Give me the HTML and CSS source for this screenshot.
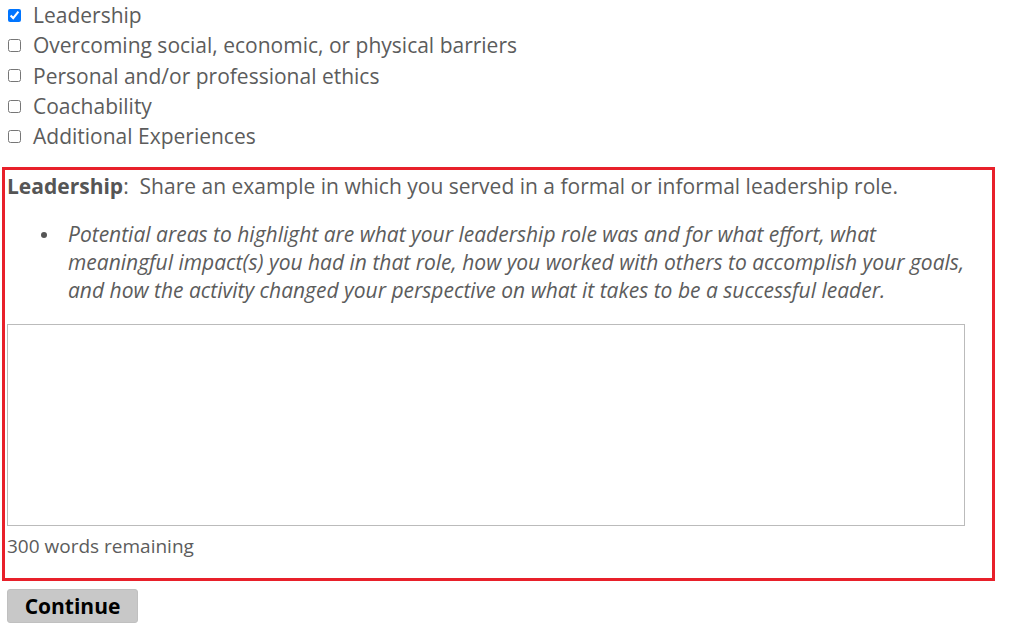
FILE: index.html
```html
<!DOCTYPE html>
<html>
<head>
<meta charset="utf-8">
<link rel="stylesheet" href="styles.css">
</head>
<body>
<div class="page">
  <ul class="options">
    <li><label><input type="checkbox" checked> Leadership</label></li>
    <li><label><input type="checkbox"> Overcoming social, economic, or physical barriers</label></li>
    <li><label><input type="checkbox"> Personal and/or professional ethics</label></li>
    <li><label><input type="checkbox"> Coachability</label></li>
    <li><label><input type="checkbox"> Additional Experiences</label></li>
  </ul>
  <div class="question">
    <p class="prompt"><strong>Leadership</strong>:&nbsp; Share an example in which you served in a formal or informal leadership role.</p>
    <ul class="hints">
      <li><span>Potential areas to highlight are what your leadership role was and for what effort, what meaningful impact(s) you had in that role, how you worked with others to accomplish your goals, and how the activity changed your perspective on what it takes to be a successful leader.</span></li>
    </ul>
    <textarea class="answer"></textarea>
    <div class="count">300 words remaining</div>
  </div>
  <button class="continue">Continue</button>
</div>
</body>
</html>
```
FILE: styles.css
```css
html, body {
  margin: 0;
  padding: 0;
  background: #fff;
}
body {
  font-family: "Open Sans", "DejaVu Sans", sans-serif;
  color: #5c5c5c;
}
.page {
  padding: 0 0 0 2px;
}
.options {
  list-style: none;
  margin: 0;
  padding: 0 0 0 6px;
  font-size: 21px;
  line-height: 30.3px;
}
.options label {
  display: flex;
  align-items: center;
  gap: 12px;
}
.options input {
  margin: 0;
  width: 13px;
  height: 13px;
}
.question {
  margin-top: 16px;
  border: 3px solid #e8202a;
  width: 993px;
  padding: 2px 2px 0 2px;
  box-sizing: border-box;
  height: 414px;
}
.prompt {
  margin: 0;
  font-size: 21px;
  line-height: 28px;
}
.prompt strong {
  font-weight: 700;
  color: #555;
}
.hints {
  list-style: none;
  margin: 20px 20px 0 0;
  padding: 0 0 0 34px;
  font-size: 21px;
  font-style: italic;
  line-height: 28px;
}
.hints li {
  display: flex;
  align-items: flex-start;
}
.hints li::before {
  content: "";
  flex: none;
  width: 6px;
  height: 6px;
  border-radius: 50%;
  background: #555;
  margin: 12px 21px 0 0;
}
.answer {
  display: block;
  margin-top: 20px;
  width: 958px;
  height: 202px;
  box-sizing: border-box;
  border: 1px solid #bbb;
  resize: none;
  padding: 0;
}
.count {
  font-size: 19px;
  line-height: 28px;
  margin-top: 6px;
}
.continue {
  margin: 8px 0 0 5px;
  font-family: "Open Sans", "DejaVu Sans", sans-serif;
  font-size: 21px;
  font-weight: 700;
  color: #000;
  background: #c8c8c8;
  border: 1px solid #c0c0c0;
  border-radius: 3px;
  width: 131px;
  height: 34px;
  padding: 0;
}
```
